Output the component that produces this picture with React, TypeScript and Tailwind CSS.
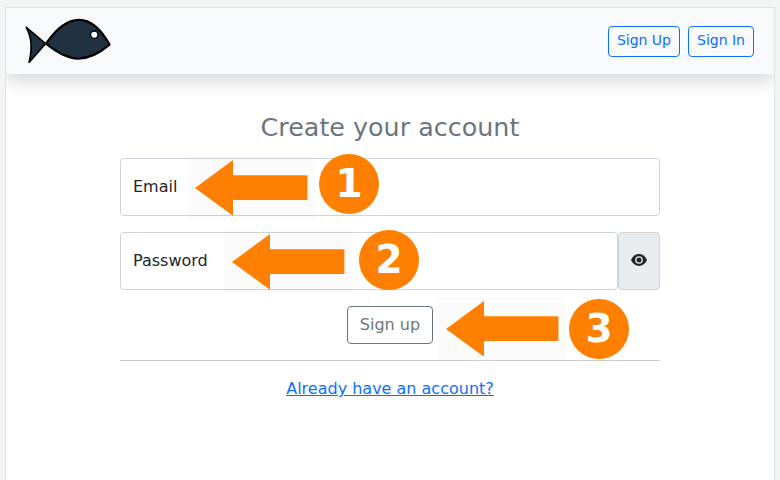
import { useState } from "react";

function FishLogo() {
  return (
    <svg width="86" height="46" viewBox="25 18 86 46" className="block" strokeLinejoin="round" stroke="#000">
      <path d="M26.3 27.3L45.5 43.7L29.2 62.3C32.3 48 32 38 26.3 27.3Z" fill="#213140" strokeWidth="1.7" />
      <path
        d="M46 43.7C57 27.5 68.5 19.8 79 19.8C92 19.8 102 31 109.5 44.5C98 54.3 89 58.6 78 58.6C67 58.6 57 52.5 46 43.7Z"
        fill="#213140"
        strokeWidth="2.3"
      />
      <circle cx="94.3" cy="34.7" r="3.7" fill="#fff" strokeWidth="1.3" />
    </svg>
  );
}

function Arrow({ className }: { className: string }) {
  return (
    <div className={`pointer-events-none absolute h-[63px] w-[128px] bg-black/[0.016] ${className}`}>
      <svg width="128" height="63" viewBox="0 0 128 63" className="block">
        <path d="M8 32L46 4V19.2H120.4V44H46V59.7Z" fill="#ff8000" />
      </svg>
    </div>
  );
}

function Step({ n, className }: { n: number; className: string }) {
  return (
    <div
      className={`pointer-events-none absolute flex h-[60px] w-[60px] items-center justify-center rounded-full bg-[#ff8000] pb-0.5 text-[39px] leading-none font-bold text-white ${className}`}
    >
      {n}
    </div>
  );
}

function NavButton({ label }: { label: string }) {
  return (
    <button className="h-[31px] rounded-[4px] border border-[#0d6efd] px-2 pb-0.5 text-sm leading-[21px] text-[#0d6efd]">
      {label}
    </button>
  );
}

export default function App() {
  const [visible, setVisible] = useState(false);
  return (
    <div className="h-[480px] overflow-hidden bg-[#f3f5f5] px-[5px] pt-[7px] font-['DejaVu_Sans',sans-serif] text-base text-[#212529]">
      <div className="h-[500px] overflow-hidden border border-[#dee2e3] bg-white">
        <header className="flex h-[66px] items-start justify-between bg-[#f8f9fb] pt-[10px] pr-5 pl-[19px] shadow-[0_8px_16px_rgba(0,0,0,0.15)]">
          <FishLogo />
          <nav className="flex gap-2 pt-2">
            <NavButton label="Sign Up" />
            <NavButton label="Sign In" />
          </nav>
        </header>
        <main className="mx-auto w-[540px] pt-[38px]">
          <h1 className="text-center text-[25.4px] leading-[30px] text-[#6c757d]">Create your account</h1>
          <div className="relative mt-4 flex h-[58px] items-center rounded-[4px] border border-[#ced4da] px-3">
            <span>Email</span>
            <Arrow className="-top-[3px] left-[66px]" />
            <Step n={1} className="-top-[5px] left-[198px]" />
          </div>
          <div className="relative mt-4 flex h-[58px]">
            <div className="flex flex-1 items-center rounded-[4px] border border-[#ced4da] px-3">
              <span>Password</span>
            </div>
            <button
              aria-label="Toggle password visibility"
              aria-pressed={visible}
              onClick={() => setVisible(!visible)}
              className="flex w-[42px] items-center justify-center rounded-[4px] border border-[#ced4da] bg-[#e9ecef] pb-[2px]"
            >
              <svg width="16" height="12" viewBox="0 0 16 12" className="block">
                <path d="M0 6C1.6 2.3 4.5 0.1 8 0.1S14.4 2.3 16 6C14.4 9.7 11.5 11.9 8 11.9S1.6 9.7 0 6Z" fill="#212529" />
                <circle cx="8" cy="6" r="3.2" fill="none" stroke="#e9ecef" strokeWidth="1.3" />
              </svg>
            </button>
            <Arrow className="-top-[2px] left-[104px]" />
            <Step n={2} className="-top-[2px] left-[239px]" />
          </div>
          <div className="relative mt-4 flex justify-center">
            <button className="h-[38px] rounded-[4px] border border-[#6c757d] px-3 text-[#6c757d]">Sign up</button>
            <Arrow className="-top-[9px] left-[318px]" />
            <Step n={3} className="-top-[7px] left-[449px]" />
          </div>
          <hr className="mt-4 border-[#c8cacb]" />
          <p className="mt-4 text-center">
            <a href="#" className="text-[#0d6efd] underline">Already have an account?</a>
          </p>
        </main>
      </div>
    </div>
  );
}
